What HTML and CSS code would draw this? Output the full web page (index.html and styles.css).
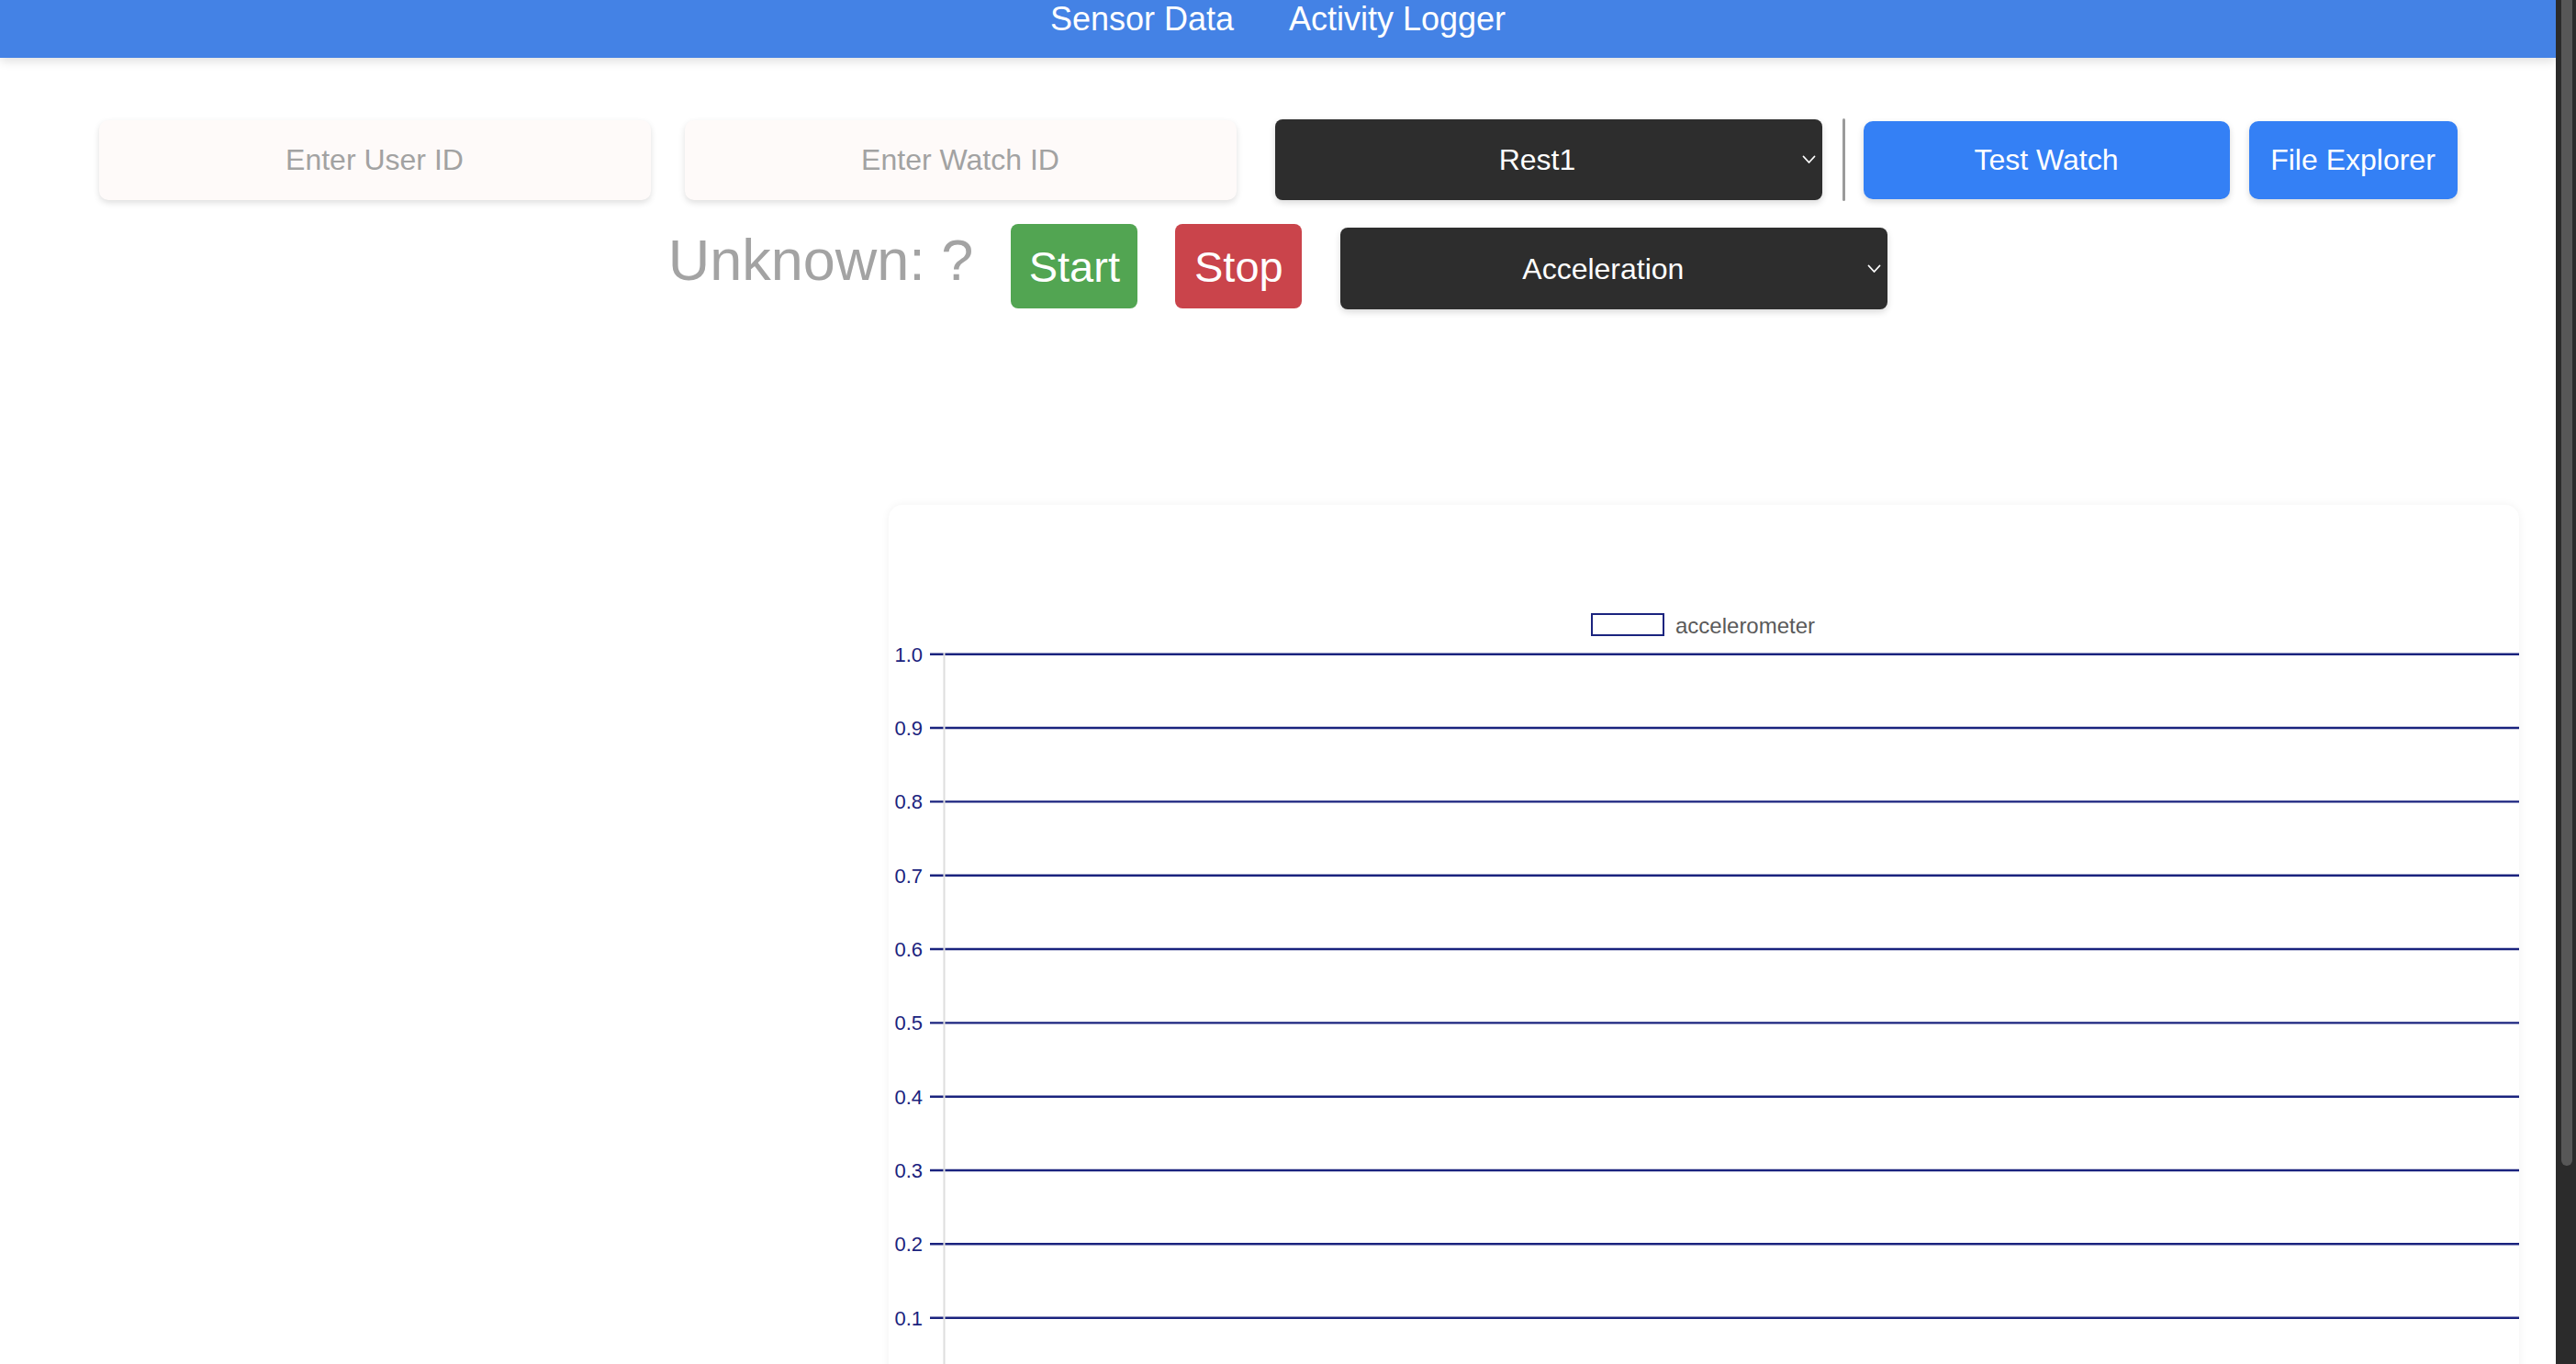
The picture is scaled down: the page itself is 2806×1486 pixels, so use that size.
FILE: index.html
```html
<!DOCTYPE html>
<html lang="en">
<head>
<meta charset="utf-8">
<title>Sensor Data</title>
<link rel="stylesheet" href="styles.css">
</head>
<body>
<div class="window">
  <div class="viewport">
    <header class="topbar">
      <nav class="topnav">
        <a class="navlink" href="#">Sensor Data</a>
        <a class="navlink" href="#">Activity Logger</a>
      </nav>
    </header>
    <main class="page">
      <div class="row row-top">
        <input class="id-input" type="text" placeholder="Enter User ID">
        <input class="id-input id-watch" type="text" placeholder="Enter Watch ID">
        <div class="select-wrap select-activity">
          <select class="dark-select"><option>Rest1</option></select>
          <svg class="chevron" width="15" height="10" viewBox="0 0 15 10"><polyline points="1.5,1.5 7.5,8 13.5,1.5" fill="none" stroke="#fff" stroke-width="1.8" stroke-linecap="round" stroke-linejoin="round"/></svg>
        </div>
        <span class="divider"></span>
        <button class="btn-blue btn-test">Test Watch</button>
        <button class="btn-blue btn-files">File Explorer</button>
      </div>
      <div class="row row-controls">
        <span class="status">Unknown: ?</span>
        <button class="btn-big btn-start">Start</button>
        <button class="btn-big btn-stop">Stop</button>
        <div class="select-wrap select-sensor">
          <select class="dark-select"><option>Acceleration</option></select>
          <svg class="chevron" width="15" height="10" viewBox="0 0 15 10"><polyline points="1.5,1.5 7.5,8 13.5,1.5" fill="none" stroke="#fff" stroke-width="1.8" stroke-linecap="round" stroke-linejoin="round"/></svg>
        </div>
      </div>
      <section class="chart-area">
        <div class="chart-card">
          <svg class="chart" width="1776" height="960" viewBox="0 0 1776 960">
            <rect x="766" y="119" width="78" height="23" fill="none" stroke="#1a237e" stroke-width="2"/>
            <text x="857" y="140" class="legend-text">accelerometer</text>
            <g stroke="#1a237e" stroke-width="2.4">
              <line x1="45" y1="162.7" x2="1776" y2="162.7"/>
              <line x1="45" y1="243.0" x2="1776" y2="243.0"/>
              <line x1="45" y1="323.4" x2="1776" y2="323.4"/>
              <line x1="45" y1="403.7" x2="1776" y2="403.7"/>
              <line x1="45" y1="484.0" x2="1776" y2="484.0"/>
              <line x1="45" y1="564.4" x2="1776" y2="564.4"/>
              <line x1="45" y1="644.7" x2="1776" y2="644.7"/>
              <line x1="45" y1="725.0" x2="1776" y2="725.0"/>
              <line x1="45" y1="805.3" x2="1776" y2="805.3"/>
              <line x1="45" y1="885.7" x2="1776" y2="885.7"/>
            </g>
            <line x1="60.5" y1="161" x2="60.5" y2="960" stroke="#dedede" stroke-width="2"/>
            <g class="axis-text" text-anchor="end">
              <text x="37" y="170.6">1.0</text>
              <text x="37" y="250.9">0.9</text>
              <text x="37" y="331.3">0.8</text>
              <text x="37" y="411.6">0.7</text>
              <text x="37" y="491.9">0.6</text>
              <text x="37" y="572.3">0.5</text>
              <text x="37" y="652.6">0.4</text>
              <text x="37" y="732.9">0.3</text>
              <text x="37" y="813.2">0.2</text>
              <text x="37" y="893.6">0.1</text>
            </g>
          </svg>
        </div>
      </section>
    </main>
  </div>
  <div class="scrollbar"><div class="scroll-thumb"></div></div>
</div>
</body>
</html>
```
FILE: styles.css
```css
html, body {
  margin: 0;
  height: 100%;
  overflow: hidden;
  background: #ffffff;
}
body {
  font-family: "Liberation Sans", Arial, Helvetica, sans-serif;
}
.window {
  display: flex;
  height: 100vh;
}
.viewport {
  flex: 1;
  min-width: 0;
  overflow: hidden;
  background: #ffffff;
}
.scrollbar {
  width: 22px;
  flex: 0 0 22px;
  box-sizing: border-box;
  padding: 0 4px 0 6px;
  background: #2b2b2b;
}
.scroll-thumb {
  height: 1270px;
  background: #575757;
  border-radius: 0 0 6px 6px;
}
.topbar {
  height: 63px;
  background: #4482e5;
  box-shadow: 0 4px 10px rgba(0, 0, 0, 0.12);
  display: flex;
  justify-content: center;
  align-items: flex-start;
  position: relative;
  z-index: 2;
}
.topnav {
  display: flex;
  gap: 60px;
}
.navlink {
  color: #ffffff;
  text-decoration: none;
  font-size: 36px;
  line-height: 42px;
}
.row {
  display: flex;
  justify-content: center;
  align-items: flex-start;
}
.row-top {
  margin-top: 66px;
}
.id-input {
  width: 601px;
  height: 87px;
  margin-top: 2px;
  box-sizing: border-box;
  border: none;
  border-radius: 10px;
  background: #fefaf9;
  box-shadow: 0 3px 7px rgba(0, 0, 0, 0.13);
  font-family: inherit;
  font-size: 32px;
  text-align: center;
  color: #333;
  outline: none;
}
.id-input::placeholder {
  color: #a2a2a2;
}
.id-watch {
  margin-left: 37px;
}
.select-wrap {
  position: relative;
}
.select-activity {
  margin-left: 42px;
  margin-top: 1px;
}
.dark-select {
  appearance: none;
  -webkit-appearance: none;
  box-sizing: border-box;
  width: 596px;
  height: 88px;
  padding: 0 24px 0 0;
  border: none;
  border-radius: 8px;
  background: #2d2d2d;
  color: #ffffff;
  font-family: inherit;
  font-size: 32px;
  text-align: center;
  text-align-last: center;
  box-shadow: 0 3px 7px rgba(0, 0, 0, 0.15);
  outline: none;
  display: block;
}
.chevron {
  position: absolute;
  right: 7px;
  top: 50%;
  margin-top: -5px;
  pointer-events: none;
}
.divider {
  width: 3px;
  height: 90px;
  border-radius: 2px;
  background: #9a9a9a;
  margin-left: 22px;
}
.btn-blue {
  height: 85px;
  margin-top: 3px;
  border: none;
  border-radius: 10px;
  background: #3480f5;
  color: #ffffff;
  font-family: inherit;
  font-size: 32px;
  box-shadow: 0 3px 7px rgba(0, 0, 0, 0.15);
  padding: 0;
}
.btn-test {
  width: 399px;
  margin-left: 20px;
}
.btn-files {
  width: 227px;
  margin-left: 21px;
}
.row-controls {
  margin-top: 25px;
}
.status {
  font-size: 63px;
  line-height: 72px;
  color: #a3a3a3;
  margin-top: 3px;
}
.btn-big {
  width: 138px;
  height: 92px;
  border: none;
  border-radius: 8px;
  color: #ffffff;
  font-family: inherit;
  font-size: 47px;
  padding: 0;
  margin-left: 41px;
}
.btn-start {
  background: #52a552;
}
.btn-stop {
  background: #ca444b;
}
.select-sensor {
  margin-left: 42px;
  margin-top: 4px;
}
.select-sensor .dark-select {
  height: 89px;
}
.chart-area {
  margin-top: 213px;
  padding-left: 968px;
  padding-right: 40px;
}
.chart-card {
  height: 960px;
  background: #ffffff;
  border-radius: 15px;
  box-shadow: 0 0 10px rgba(0, 0, 0, 0.06);
  overflow: hidden;
}
.chart {
  display: block;
}
.legend-text {
  font-family: "Liberation Sans", Arial, sans-serif;
  font-size: 24px;
  fill: #5a5a5a;
}
.axis-text {
  font-family: "Liberation Sans", Arial, sans-serif;
  font-size: 22px;
  fill: #1a237e;
}
```
